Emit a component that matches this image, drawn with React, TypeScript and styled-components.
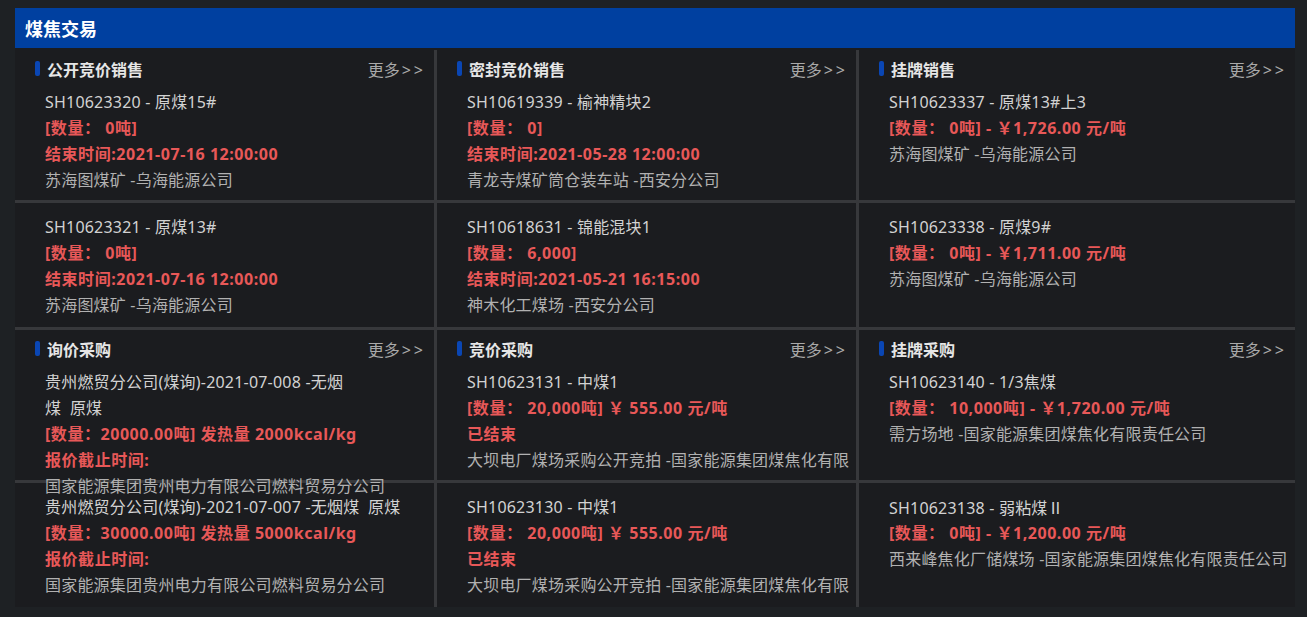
import React from "react";
import styled, { createGlobalStyle } from "styled-components";

const GlobalStyle = createGlobalStyle`
  html, body {
    margin: 0;
    padding: 0;
    background: #1e2124;
  }
  body {
    font-family: "Noto Sans", "Noto Sans CJK SC", sans-serif;
    -webkit-font-smoothing: antialiased;
  }
`;

const Page = styled.div`
  padding: 8px 12px 10px 15px;
`;

const Panel = styled.section`
  width: 1280px;
  background: #1b1c1f;
`;

const PanelHeader = styled.h2`
  margin: 0;
  height: 40px;
  padding-left: 10px;
  display: flex;
  align-items: center;
  background: #0040a0;
  color: #ffffff;
  font-size: 18px;
  font-weight: 700;
  font-family: "Noto Sans CJK SC", sans-serif;
`;

const Body = styled.div`
  padding-top: 2px;
  background: #1b1c1f;
`;

const Grid = styled.div`
  display: grid;
  grid-template-columns: 419px 419px 1fr;
  grid-template-rows: 150px 124px 150px 124px;
  gap: 3px;
  background: #37383b;
`;

const Cell = styled.div<{ $titled: boolean }>`
  background: #1b1c1f;
  padding-top: ${(p) => (p.$titled ? "10px" : "11px")};
  min-width: 0;
`;

const TitleRow = styled.div`
  display: flex;
  align-items: center;
  justify-content: space-between;
  height: 18px;
  padding: 0 8px 0 20px;
  margin-bottom: 11px;
`;

const TitleText = styled.h3`
  margin: 0;
  display: flex;
  align-items: center;
  gap: 7px;
  font-size: 16px;
  font-weight: 700;
  color: #e6e6e6;
  line-height: 18px;
  font-family: "Noto Sans CJK SC", sans-serif;

  &::before {
    content: "";
    width: 5px;
    height: 15px;
    border-radius: 2px;
    background: #0a46b4;
    margin-top: -2px;
  }
`;

const More = styled.a`
  font-size: 16px;
  color: #a9a9a9;
  line-height: 18px;
  text-decoration: none;
  cursor: pointer;
  font-family: "Noto Sans CJK SC", sans-serif;
`;

const Arrows = styled.span`
  letter-spacing: 3px;
  margin-left: 2px;
  font-family: "Noto Sans", sans-serif;
`;

const Lines = styled.div`
  position: relative;
  padding: 0 2px 0 30px;
`;

type Tone = "id" | "red" | "muted";

const Line = styled.div<{ $tone: Tone }>`
  height: 26px;
  line-height: 26px;
  overflow: hidden;
  font-size: 16px;
  font-weight: ${(p) => (p.$tone === "red" ? 700 : 400)};
  letter-spacing: ${(p) => (p.$tone === "red" ? "0.55px" : "0.2px")};
  color: ${(p) =>
    p.$tone === "red" ? "#e85858" : p.$tone === "id" ? "#d2d2d2" : "#b1b1b1"};
`;

const Numeral = styled.span`
  font-family: "Noto Sans CJK SC", serif;
`;

type LineData = { text: React.ReactNode; tone: Tone };
type CellData = { title?: string; lines: LineData[] };

const id = (text: React.ReactNode): LineData => ({ text, tone: "id" });
const red = (text: React.ReactNode): LineData => ({ text, tone: "red" });
const muted = (text: React.ReactNode): LineData => ({ text, tone: "muted" });

const cells: CellData[] = [
  {
    title: "公开竞价销售",
    lines: [
      id("SH10623320 - 原煤15#"),
      red("[数量： 0吨]"),
      red("结束时间:2021-07-16 12:00:00"),
      muted("苏海图煤矿 -乌海能源公司"),
    ],
  },
  {
    title: "密封竞价销售",
    lines: [
      id("SH10619339 - 榆神精块2"),
      red("[数量： 0]"),
      red("结束时间:2021-05-28 12:00:00"),
      muted("青龙寺煤矿筒仓装车站 -西安分公司"),
    ],
  },
  {
    title: "挂牌销售",
    lines: [
      id("SH10623337 - 原煤13#上3"),
      red("[数量： 0吨] - ￥1,726.00 元/吨"),
      muted("苏海图煤矿 -乌海能源公司"),
    ],
  },
  {
    lines: [
      id("SH10623321 - 原煤13#"),
      red("[数量： 0吨]"),
      red("结束时间:2021-07-16 12:00:00"),
      muted("苏海图煤矿 -乌海能源公司"),
    ],
  },
  {
    lines: [
      id("SH10618631 - 锦能混块1"),
      red("[数量： 6,000]"),
      red("结束时间:2021-05-21 16:15:00"),
      muted("神木化工煤场 -西安分公司"),
    ],
  },
  {
    lines: [
      id("SH10623338 - 原煤9#"),
      red("[数量： 0吨] - ￥1,711.00 元/吨"),
      muted("苏海图煤矿 -乌海能源公司"),
    ],
  },
  {
    title: "询价采购",
    lines: [
      id("贵州燃贸分公司(煤询)-2021-07-008 -无烟"),
      id("煤\u00a0 原煤"),
      red("[数量：20000.00吨] 发热量 2000kcal/kg"),
      red("报价截止时间:"),
      muted("国家能源集团贵州电力有限公司燃料贸易分公司"),
    ],
  },
  {
    title: "竞价采购",
    lines: [
      id("SH10623131 - 中煤1"),
      red("[数量： 20,000吨] ￥ 555.00 元/吨"),
      red("已结束"),
      muted("大坝电厂煤场采购公开竞拍 -国家能源集团煤焦化有限责任公司"),
    ],
  },
  {
    title: "挂牌采购",
    lines: [
      id("SH10623140 - 1/3焦煤"),
      red("[数量： 10,000吨] - ￥1,720.00 元/吨"),
      muted("需方场地 -国家能源集团煤焦化有限责任公司"),
    ],
  },
  {
    lines: [
      id("贵州燃贸分公司(煤询)-2021-07-007 -无烟煤\u00a0 原煤"),
      red("[数量：30000.00吨] 发热量 5000kcal/kg"),
      red("报价截止时间:"),
      muted("国家能源集团贵州电力有限公司燃料贸易分公司"),
    ],
  },
  {
    lines: [
      id("SH10623130 - 中煤1"),
      red("[数量： 20,000吨] ￥ 555.00 元/吨"),
      red("已结束"),
      muted("大坝电厂煤场采购公开竞拍 -国家能源集团煤焦化有限责任公司"),
    ],
  },
  {
    lines: [
      id(
        <>
          SH10623138 - 弱粘煤<Numeral>Ⅱ</Numeral>
        </>
      ),
      red("[数量： 0吨] - ￥1,200.00 元/吨"),
      muted("西来峰焦化厂储煤场 -国家能源集团煤焦化有限责任公司"),
    ],
  },
];

export default function App() {
  return (
    <>
      <GlobalStyle />
      <Page>
        <Panel>
          <PanelHeader>煤焦交易</PanelHeader>
          <Body>
            <Grid>
              {cells.map((c, i) => (
                <Cell key={i} $titled={!!c.title}>
                  {c.title && (
                    <TitleRow>
                      <TitleText>{c.title}</TitleText>
                      <More>
                        更多<Arrows>&gt;&gt;</Arrows>
                      </More>
                    </TitleRow>
                  )}
                  <Lines>
                    {c.lines.map((l, j) => (
                      <Line key={j} $tone={l.tone}>
                        {l.text}
                      </Line>
                    ))}
                  </Lines>
                </Cell>
              ))}
            </Grid>
          </Body>
        </Panel>
      </Page>
    </>
  );
}
